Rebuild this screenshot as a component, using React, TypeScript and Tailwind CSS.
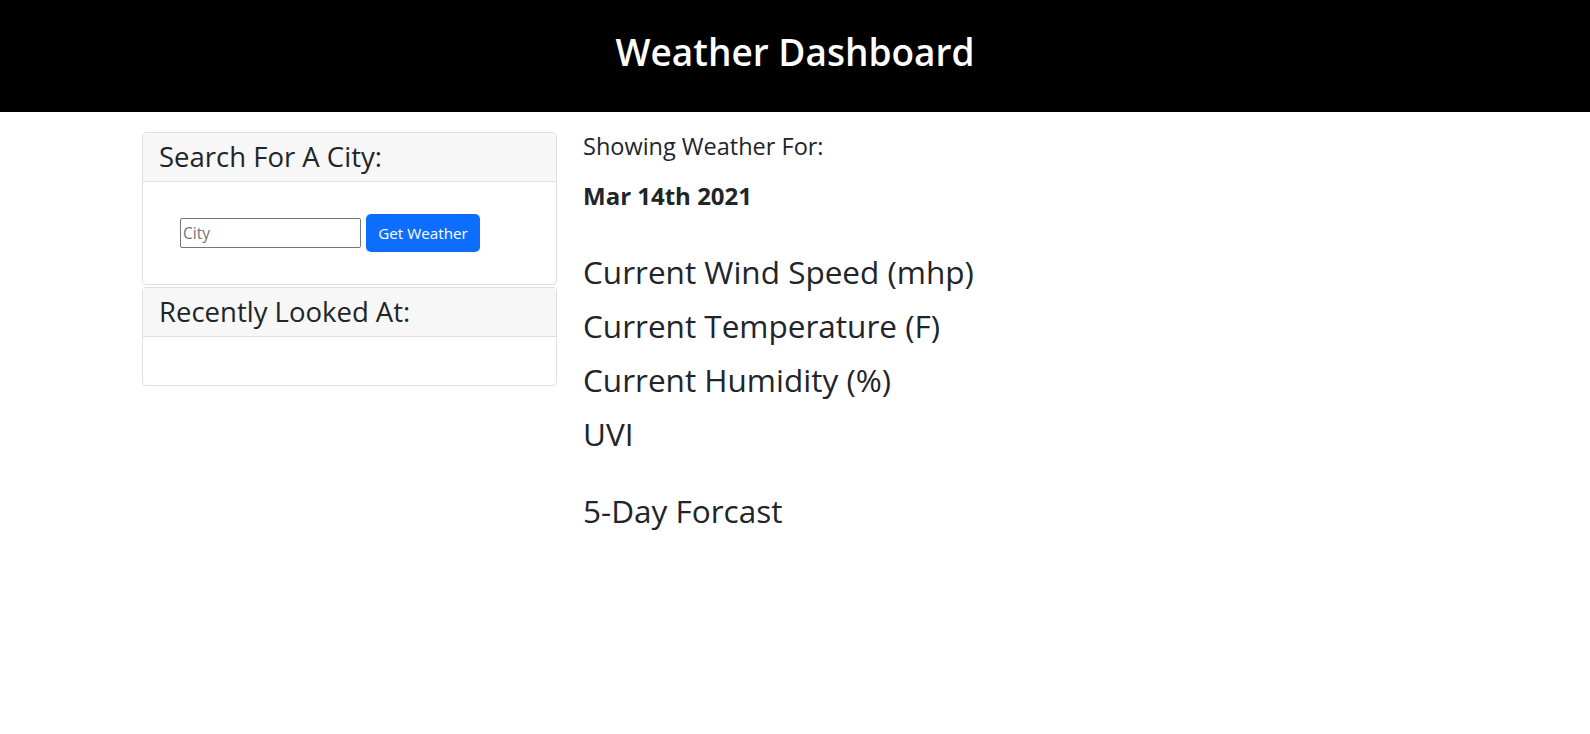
import React from "react";

const FONT = "font-['Open_Sans','Noto_Sans',sans-serif]";

const DETAILS = [
  "Current Wind Speed (mhp)",
  "Current Temperature (F)",
  "Current Humidity (%)",
  "UVI",
];

function Card({ title, children }: { title: string; children?: React.ReactNode }) {
  return (
    <div className="border border-[#dfdfdf] rounded-[4px] bg-white">
      <div className="h-[49px] bg-[#f7f7f7] border-b border-[#dfdfdf] px-[16px] flex items-center">
        <h3 className="text-[27.5px] text-[#212529] leading-none">{title}</h3>
      </div>
      {children}
    </div>
  );
}

export default function App() {
  return (
    <div className={`${FONT} min-h-[734px] bg-white text-[#212529]`}>
      <header className="h-[112px] bg-black flex items-center justify-center pb-[10px]">
        <h1 className="text-[37px] font-semibold text-white leading-none">Weather Dashboard</h1>
      </header>

      <main className="flex pl-[142px] pt-[20px]">
        <aside className="w-[415px] flex flex-col gap-[2px]">
          <Card title="Search For A City:">
            <div className="h-[102px] flex items-center pl-[37px] gap-[5px]">
              <input
                type="text"
                placeholder="City"
                className="w-[181px] h-[30px] border border-[#767676] rounded-[2px] px-[2px] text-[15.5px] placeholder:text-[#757575] outline-none"
              />
              <button
                type="button"
                className="w-[114px] h-[38px] bg-[#0d6efd] text-white rounded-[5px] text-[15.2px]"
              >
                Get Weather
              </button>
            </div>
          </Card>
          <Card title="Recently Looked At:">
            <div className="h-[48px]" />
          </Card>
        </aside>

        <section className="ml-[26px] flex flex-col">
          <p className="text-[23.5px] leading-[29px]">Showing Weather For:</p>
          <p className="text-[24px] leading-[29px] font-bold mt-[20px]">Mar 14th 2021</p>
          <div className="mt-[43px] flex flex-col gap-[16px]">
            {DETAILS.map((d) => (
              <h2 key={d} className="text-[31.5px] leading-[38px]">
                {d}
              </h2>
            ))}
          </div>
          <h2 className="text-[31.5px] leading-[38px] mt-[39px]">5-Day Forcast</h2>
        </section>
      </main>
    </div>
  );
}
